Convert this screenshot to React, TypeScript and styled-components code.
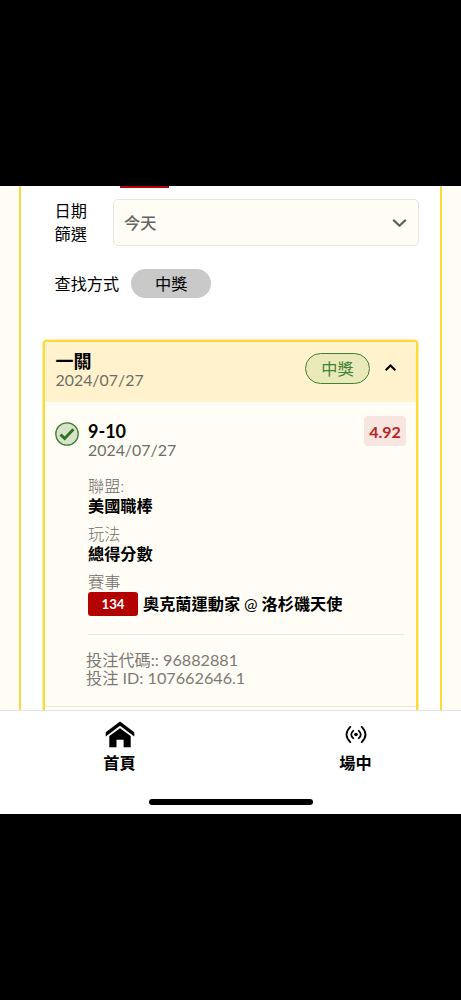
import React from "react";
import styled, { createGlobalStyle } from "styled-components";

const Global = createGlobalStyle`
  * { box-sizing: border-box; }
  body {
    margin: 0;
    background: #000;
    color: #000;
    font-family: Lato, "Noto Sans CJK TC", sans-serif;
    font-size: 16.2px;
  }
`;

const Screen = styled.div`
  display: flex;
  flex-direction: column;
  width: 461px;
  height: 1000px;
  padding: 186px 0;
  background: #000;
  overflow: hidden;
`;

const Page = styled.main`
  height: 524px;
  flex: none;
  padding: 0 19px;
  background: #fffdf5;
  overflow: hidden;
`;

const Frame = styled.div`
  height: 524px;
  border: solid #fbda3c;
  border-width: 0 2px;
  background: #fff;
  padding: 0 22px;
`;

const TabMark = styled.div`
  width: 49px;
  height: 1.5px;
  margin-left: 77px;
  background: #b3000a;
`;

const DateRow = styled.div`
  display: flex;
  align-items: center;
  margin-top: 11.5px;
  height: 47px;
  padding-left: 11.5px;
`;

const DateLabel = styled.label`
  flex: none;
  width: 34px;
  margin-right: 24.5px;
  padding-bottom: 2px;
  line-height: 23px;
`;

const Select = styled.div`
  display: flex;
  align-items: center;
  justify-content: space-between;
  width: 306px;
  flex: none;
  height: 47px;
  padding: 0 11px 0 10px;
  border: 1px solid #ebe3dc;
  border-radius: 5px;
  background: #fffdf5;
  color: #666460;
  font-weight: 500;
  & > span { padding-bottom: 2px; }
`;

const MethodRow = styled.div`
  display: flex;
  align-items: center;
  gap: 12px;
  height: 29px;
  margin-top: 23px;
  padding-left: 11.5px;
  & > span:first-child { padding-bottom: 2px; }
`;

const Chip = styled.span`
  width: 80px;
  height: 29px;
  border-radius: 15px;
  background: #c9c9c9;
  line-height: 29px;
  text-align: center;
`;

const Card = styled.section`
  width: 375px;
  height: 400px;
  margin-top: 42px;
  border: 2px solid #fbda3c;
  border-radius: 4px;
  box-shadow: 0 0 0 1px rgba(251, 218, 60, 0.45);
  background: #fffdf5;
  overflow: hidden;
`;

const CardHeader = styled.header`
  display: flex;
  align-items: center;
  height: 60px;
  padding: 0 19px 0 10.5px;
  background: #fff2cc;
`;

const Titles = styled.div<{ $top?: number; $bottom?: number }>`
  flex: 1;
  padding-top: ${(p) => p.$top ?? 0}px;
  padding-bottom: ${(p) => p.$bottom ?? 0}px;
`;

const Title = styled.div`
  font-size: 18px;
  font-weight: 700;
  line-height: 20px;
`;

const Day = styled.div`
  color: #706d68;
  font-size: 15.9px;
  line-height: 18.5px;
`;

const HeaderStatus = styled.div`
  display: flex;
  align-items: center;
  padding-bottom: 8px;
`;

const WinBadge = styled.span`
  width: 65px;
  height: 31px;
  margin-right: 14px;
  border: 1.4px solid #3f8232;
  border-radius: 16px;
  background: #eae9ba;
  color: #3f8232;
  line-height: 29px;
  text-align: center;
`;

const Bet = styled.div`
  display: flex;
  align-items: flex-start;
  padding: 14px 10px 0 10px;
  height: 65px;
`;

const WonIcon = styled.svg`
  margin: 6px 9px 0 0;
`;

const Odds = styled.span`
  width: 42px;
  height: 30px;
  border-radius: 4px;
  background: #f9e5df;
  color: #b5261e;
  font-weight: 700;
  font-size: 16px;
  line-height: 31px;
  text-align: center;
`;

const Details = styled.div`
  width: 316px;
  margin-left: 43px;
  padding-top: 9px;
  height: 168px;
  border-bottom: 1px solid #ebe6df;
`;

const Field = styled.div`
  height: 48px;
`;

const FieldName = styled.div`
  color: #706d68;
  font-weight: 300;
  line-height: 20px;
`;

const FieldValue = styled.div`
  display: flex;
  align-items: center;
  gap: 5px;
  font-weight: 700;
  line-height: 20px;
  white-space: nowrap;
`;

const Versus = styled.span`
  font-weight: 400;
`;

const MatchNo = styled.span`
  width: 50px;
  height: 24px;
  border-radius: 3px;
  background: #b30000;
  color: #fff;
  font-size: 13.3px;
  line-height: 25px;
  text-align: center;
`;

const Codes = styled.div`
  height: 72px;
  padding: 16px 0 0 41px;
  border-bottom: 1px solid #ebe6df;
  color: #7d7a76;
  line-height: 18px;
`;

const Nav = styled.nav`
  display: flex;
  flex-direction: column;
  flex: none;
  height: 104px;
  border-top: 1px solid #e4e4e6;
  background: #fff;
`;

const NavItems = styled.div`
  display: flex;
  height: 88px;
`;

const NavItem = styled.div<{ $width: number }>`
  display: flex;
  flex: none;
  width: ${(p) => p.$width}px;
  flex-direction: column;
  align-items: center;
  padding-top: 10px;
  font-weight: 700;
  line-height: 23px;
  & > svg { height: 30px; }
`;

const HomeBar = styled.div`
  width: 164px;
  height: 6px;
  margin-left: 149px;
  border-radius: 3px;
  background: #000;
`;

export default function App() {
  return (
    <>
      <Global />
      <Screen>
        <Page>
          <Frame>
            <TabMark />
            <DateRow>
              <DateLabel>日期篩選</DateLabel>
              <Select>
                <span>今天</span>
                <svg width="15" height="10" viewBox="0 0 15 10" fill="none">
                  <path d="M1.8 2.4 7.5 7.8 13.2 2.4" stroke="#64615c" strokeWidth="2.2" strokeLinecap="round" strokeLinejoin="round" />
                </svg>
              </Select>
            </DateRow>
            <MethodRow>
              <span>查找方式</span>
              <Chip>中獎</Chip>
            </MethodRow>
            <Card>
              <CardHeader>
                <Titles $bottom={3}>
                  <Title>一關</Title>
                  <Day>2024/07/27</Day>
                </Titles>
                <HeaderStatus>
                  <WinBadge>中獎</WinBadge>
                  <svg width="13" height="9" viewBox="0 0 13 9" fill="none">
                    <path d="M1.7 6.2 6.5 1.5 11.3 6.2" stroke="#000" strokeWidth="2.1" />
                  </svg>
                </HeaderStatus>
              </CardHeader>
              <Bet>
                <WonIcon width="24" height="24" viewBox="0 0 24 24" fill="none">
                  <circle cx="12" cy="12" r="11.2" fill="#d6e3ca" stroke="#3f8232" strokeWidth="1.3" />
                  <path d="M5.5 12.6 9.7 16.4 18.4 7.3" stroke="#2f7420" strokeWidth="2.9" />
                </WonIcon>
                <Titles $top={5}>
                  <Title>9-10</Title>
                  <Day>2024/07/27</Day>
                </Titles>
                <Odds>4.92</Odds>
              </Bet>
              <Details>
                <Field>
                  <FieldName>聯盟:</FieldName>
                  <FieldValue>美國職棒</FieldValue>
                </Field>
                <Field>
                  <FieldName>玩法</FieldName>
                  <FieldValue>總得分數</FieldValue>
                </Field>
                <Field>
                  <FieldName>賽事</FieldName>
                  <FieldValue>
                    <MatchNo>134</MatchNo>
                    <span>奧克蘭運動家 <Versus>@</Versus> 洛杉磯天使</span>
                  </FieldValue>
                </Field>
              </Details>
              <Codes>
                <div>投注代碼:: 96882881</div>
                <div>投注 ID: 107662646.1</div>
              </Codes>
            </Card>
          </Frame>
        </Page>
        <Nav>
          <NavItems>
            <NavItem $width={239}>
              <svg width="30" viewBox="0 0 30 30">
                <path d="M15 .5 29.3 11.2v4.2L15 4.8 .7 15.4v-4.2Z" />
                <path d="M15 7.2 25.7 15V26.3H18.6V18.7H11.5V26.3H4.3V15Z" />
              </svg>
              <span>首頁</span>
            </NavItem>
            <NavItem $width={233}>
              <svg width="24" viewBox="0 0 24 30" fill="none" stroke="#000" strokeWidth="1.8" strokeLinecap="round">
                <circle cx="12" cy="13.5" r="1.8" fill="#000" stroke="none" />
                <path d="M9.2 9.8Q5.2 13.5 9.2 17.2M14.8 9.8Q18.8 13.5 14.8 17.2M6.3 5.9Q-1.3 13.5 6.3 21.1M17.7 5.9Q25.3 13.5 17.7 21.1" />
              </svg>
              <span>場中</span>
            </NavItem>
          </NavItems>
          <HomeBar />
        </Nav>
      </Screen>
    </>
  );
}
